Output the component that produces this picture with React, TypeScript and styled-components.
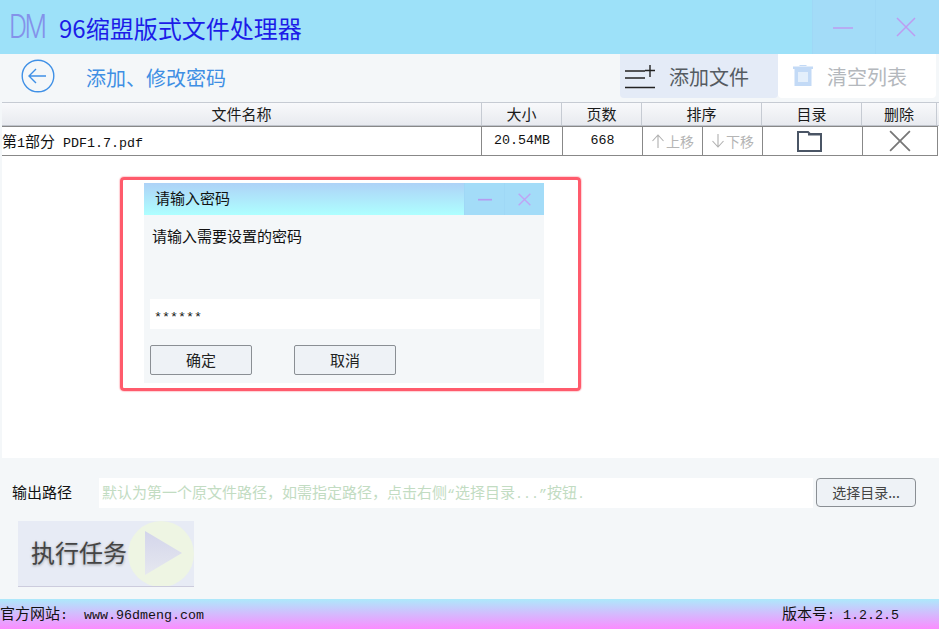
import React from "react";
import styled, { createGlobalStyle } from "styled-components";

const cjk = `"Noto Sans CJK SC", "Liberation Sans", sans-serif`;
const mono = `"Liberation Mono", "Noto Sans CJK SC", monospace`;

const Global = createGlobalStyle`
  html, body { margin: 0; padding: 0; width: 939px; height: 629px; overflow: hidden; background: #f4f7f9; }
  * { box-sizing: border-box; }
`;

const Latin = styled.span`
  font: 400 13.33px/1 ${mono}; white-space: pre;
`;
const Page = styled.div`
  position: relative; width: 939px; height: 629px; display: flex; flex-direction: column;
  background: #f4f7f9; font-family: ${cjk}; color: #111;
`;
const TitleBar = styled.header`
  height: 54px; flex: none; display: flex; align-items: center; background: #9de1f9; padding-left: 9px;
`;
const Logo = styled.span`
  width: 36px; font: 300 32px/1 "Inter", "Liberation Sans", sans-serif; letter-spacing: -3px;
  color: #8492ea; margin-right: 14px; position: relative; top: 0; transform: scaleX(.78); transform-origin: left;
  white-space: nowrap;
`;
const AppName = styled.h1`
  margin: 0; font: 400 24px/1 ${cjk}; color: #1c1ce8; flex: 1; position: relative; top: 1px;
`;
const WinButton = styled.div<{ $w: number; $shift?: number }>`
  width: ${p => p.$w}px; height: 100%; display: flex; align-items: center; justify-content: center;
  padding-right: ${p => p.$shift ?? 0}px;
  background: #a3dcf8; border-left: 1px solid #9fd8f6;
`;
const Toolbar = styled.div`
  height: 48px; flex: none; display: flex; align-items: flex-start;
`;
const BackArea = styled.div`
  width: 86px; height: 44px; padding: 5px 0 0 21px;
`;
const PageTitle = styled.div`
  flex: 1; height: 48px; font-size: 20px; line-height: 48px; color: #3f8fe4;
`;
const ToolButton = styled.div<{ $muted?: boolean }>`
  width: 158px; height: 44px; display: flex; align-items: center; font-size: 20px; padding-left: ${p => (p.$muted ? 15 : 5)}px;
  border-radius: 0 0 4px 4px; gap: 14px;
  background: ${p => (p.$muted ? "#fff" : "#e4ebf7")}; color: ${p => (p.$muted ? "#b4b8bd" : "#555b61")};
`;
const TableArea = styled.main`
  height: 356px; flex: none; margin-left: 2px; background: #fff;
`;
const HeaderRow = styled.div`
  display: grid; grid-template-columns: 480px 80px 80px 120px 100px 75px; height: 24px;
  background: linear-gradient(#f8f9fb, #e8eaef); border-top: 1px solid #c6cbd3; border-bottom: 1px solid #c0c4cc;
`;
const HeaderCell = styled.div`
  text-align: center; font-size: 15px; line-height: 21px; border-right: 1px solid #c6cbd3; color: #1a1a1a;
`;
const DataRow = styled.div`
  display: grid; grid-template-columns: 480px 81px 80px 120px 100px 75px; height: 30px; border-top: 1px solid #888; border-bottom: 1px solid #888;
  width: 936px;
`;
const DataCell = styled.div<{ $left?: boolean }>`
  display: flex; align-items: center; justify-content: ${p => (p.$left ? "flex-start" : "center")};
  font-size: 15px; line-height: 26px; border-right: 1px solid #888; color: #111; white-space: pre; min-width: 0;
`;
const FileName = styled.span`
  display: block; line-height: 26px;
`;
const FolderCell = styled(DataCell)`
  padding-right: 6px;
`;
const SortCell = styled.div`
  display: grid; grid-template-columns: 60px 59px; border-right: 1px solid #888;
`;
const SortButton = styled.div`
  display: flex; align-items: center; justify-content: center; gap: 1px; font-size: 14px; color: #b5b5b5;
  border-right: 1px solid #888;
  &:last-child { border-right: 0; }
`;
const Bottom = styled.section`
  flex: 1; display: flex; flex-direction: column; padding-top: 20px;
`;
const PathRow = styled.div`
  display: flex; align-items: flex-start; height: 30px;
`;
const PathLabel = styled.div`
  width: 99px; padding-left: 12px; font-size: 15px; line-height: 27px;
`;
const PathInput = styled.div`
  width: 714px; height: 30px; background: #fff; color: #c2dcc2; font-size: 15px; line-height: 28px; padding-left: 3px; white-space: nowrap;
`;
const Button = styled.div<{ $w: number; $r?: number }>`
  width: ${p => p.$w}px; height: 30px; border: 1px solid #8a8f94; border-radius: ${p => p.$r ?? 2}px; background: #eef2f6;
  text-align: center; font-size: 15px; line-height: 27px; color: #222; flex: none;
`;
const BrowseButton = styled(Button)`
  margin-left: 3px; height: 29px; color: #444; font-size: 14px; line-height: 26px;
`;
const RunButton = styled.div`
  margin: 13px 0 0 18px; width: 176px; height: 66px; display: flex; align-items: center; overflow: hidden;
  background: #e7ebf5; font-size: 24px; line-height: 60px; color: #444; padding-left: 13px; text-shadow: 0 1px 3px rgba(0,0,0,.35);
  border-bottom: 1px solid #ccd;
`;
const RunLabel = styled.span`
  position: relative; top: -2px;
`;
const RunIcon = styled.svg`
  margin-left: auto; flex: none;
`;
const Footer = styled.footer`
  height: 30px; flex: none; display: flex; align-items: flex-start; justify-content: space-between; padding: 0 40px 0 0;
  background: linear-gradient(#ade9fb, #fb8cff); font-size: 15px; line-height: 28px; white-space: pre;
`;
const Frame = styled.div`
  position: absolute; left: 120px; top: 177px; width: 461px; height: 214px; padding: 3px 0 0 21px;
  border: 3px solid #ff5b6c; border-radius: 4px; box-shadow: 0 0 1px 1px rgba(255,120,135,.35);
`;
const Dialog = styled.div`
  width: 400px; height: 200px; background: #f4f7f9; display: flex; flex-direction: column;
`;
const DialogBar = styled.div`
  height: 32px; flex: none; display: flex; background: linear-gradient(#aed2f7, #aeffff);
  font-size: 15px; line-height: 29px;
`;
const DialogTitle = styled.div`
  flex: 1; padding-left: 11px;
`;
const DialogWin = styled.div`
  width: 40px; display: flex; align-items: center; justify-content: center; background: #a3dcf8; border-left: 1px solid #9fd8f6;
`;
const Prompt = styled.div`
  padding: 10px 0 0 8px; height: 84px; font-size: 15px; line-height: 22px;
`;
const Password = styled.div`
  margin-left: 6px; width: 390px; height: 30px; background: #fff; padding-left: 4px; font: 400 13.33px/38px ${mono};
`;
const DialogActions = styled.div`
  display: flex; gap: 42px; margin: 16px 0 0 6px;
`;

const Cross = ({ size, color, w = 1.5 }: { size: number; color: string; w?: number }) => (
  <svg width={size} height={size} viewBox="0 0 20 20"><path d="M1 1L19 19M19 1L1 19" stroke={color} strokeWidth={w} fill="none" /></svg>
);
const Minus = ({ size, color, w = 1.5 }: { size: number; color: string; w?: number }) => (
  <svg width={size} height={size} viewBox="0 0 20 20"><path d="M0 11H20" stroke={color} strokeWidth={w} fill="none" /></svg>
);
const UpArrow = ({ down }: { down?: boolean }) => (
  <svg width="14" height="16" viewBox="0 0 14 16" style={down ? { transform: "scaleY(-1)" } : undefined}>
    <path d="M7 15V2M1.5 8L7 2L12.5 8" stroke="#b0b0b0" strokeWidth="1.1" fill="none" />
  </svg>
);

export default function App() {
  return (
    <Page>
      <Global />
      <TitleBar>
        <Logo>DM</Logo>
        <AppName>96缩盟版式文件处理器</AppName>
        <WinButton $w={63} $shift={2}><Minus size={20} color="#bd9cf0" /></WinButton>
        <WinButton $w={64} $shift={3}><Cross size={20} color="#bd9cf0" /></WinButton>
      </TitleBar>
      <Toolbar>
        <BackArea>
          <svg width="34" height="34" viewBox="0 0 34 34">
            <circle cx="17" cy="17" r="15.8" stroke="#3f90e6" strokeWidth="1.4" fill="none" />
            <path d="M25 17H8M15 10L8 17L15 24" stroke="#3f90e6" strokeWidth="1.4" fill="none" />
          </svg>
        </BackArea>
        <PageTitle>添加、修改密码</PageTitle>
        <ToolButton>
          <svg width="30" height="26" viewBox="0 0 30 26">
            <path d="M0 8H20M0 15H20M0 24.5H30M25 2V14M20 7.5H30" stroke="#222" strokeWidth="1.4" fill="none" />
          </svg>
          添加文件
        </ToolButton>
        <ToolButton $muted style={{ marginRight: 3 }}>
          <svg width="20" height="22" viewBox="0 0 20 22">
            <path d="M0 1.5H20V4H18.5V21H1.5V4H0Z M5 7V17H15V7Z" fill="#c3daf6" fillRule="evenodd" />
            <path d="M5 7H15V17H5Z" fill="#e4effb" />
            <path d="M6 1L7 0H13L14 1Z" fill="#c3daf6" />
          </svg>
          清空列表
        </ToolButton>
      </Toolbar>
      <TableArea>
        <HeaderRow>
          <HeaderCell>文件名称</HeaderCell>
          <HeaderCell>大小</HeaderCell>
          <HeaderCell>页数</HeaderCell>
          <HeaderCell>排序</HeaderCell>
          <HeaderCell>目录</HeaderCell>
          <HeaderCell>删除</HeaderCell>
        </HeaderRow>
        <DataRow>
          <DataCell $left><FileName>第<Latin>1</Latin>部分<Latin> PDF1.7.pdf</Latin></FileName></DataCell>
          <DataCell><Latin>20.54MB</Latin></DataCell>
          <DataCell><Latin>668</Latin></DataCell>
          <SortCell>
            <SortButton><UpArrow />上移</SortButton>
            <SortButton><UpArrow down />下移</SortButton>
          </SortCell>
          <FolderCell>
            <svg width="25" height="21" viewBox="0 0 25 21">
              <path d="M1 20V1H11L13 3H24V20Z" stroke="#4a5565" strokeWidth="2" fill="none" />
              <path d="M11 3.5H24" stroke="#4a5565" strokeWidth="2" fill="none" />
            </svg>
          </FolderCell>
          <DataCell><Cross size={22} color="#777" w={1.6} /></DataCell>
        </DataRow>
      </TableArea>
      <Bottom>
        <PathRow>
          <PathLabel>输出路径</PathLabel>
          <PathInput>默认为第一个原文件路径，如需指定路径，点击右侧<Latin>“</Latin>选择目录<Latin>...”</Latin>按钮<Latin>.</Latin></PathInput>
          <BrowseButton $w={100} $r={4}>选择目录...</BrowseButton>
        </PathRow>
        <RunButton>
          <RunLabel>执行任务</RunLabel>
          <RunIcon width="66" height="66" viewBox="0 0 66 66">
            <defs>
              <linearGradient id="tri" x1="0" y1="0" x2="0" y2="1">
                <stop offset="0" stopColor="#d3d5eb" />
                <stop offset="1" stopColor="#e6e8ef" />
              </linearGradient>
            </defs>
            <circle cx="33" cy="33" r="33" fill="#eef5e3" />
            <path d="M17 10V54L54 32Z" fill="url(#tri)" />
          </RunIcon>
        </RunButton>
      </Bottom>
      <Footer>
        <span>官方网站<Latin>:  www.96dmeng.com</Latin></span>
        <span>版本号<Latin>: 1.2.2.5</Latin></span>
      </Footer>
      <Frame>
        <Dialog>
          <DialogBar>
            <DialogTitle>请输入密码</DialogTitle>
            <DialogWin><Minus size={14} color="#b59cf0" w={2.4} /></DialogWin>
            <DialogWin><Cross size={13} color="#bfa4f4" w={2.2} /></DialogWin>
          </DialogBar>
          <Prompt>请输入需要设置的密码</Prompt>
          <Password>******</Password>
          <DialogActions>
            <Button $w={102}>确定</Button>
            <Button $w={102}>取消</Button>
          </DialogActions>
        </Dialog>
      </Frame>
    </Page>
  );
}
